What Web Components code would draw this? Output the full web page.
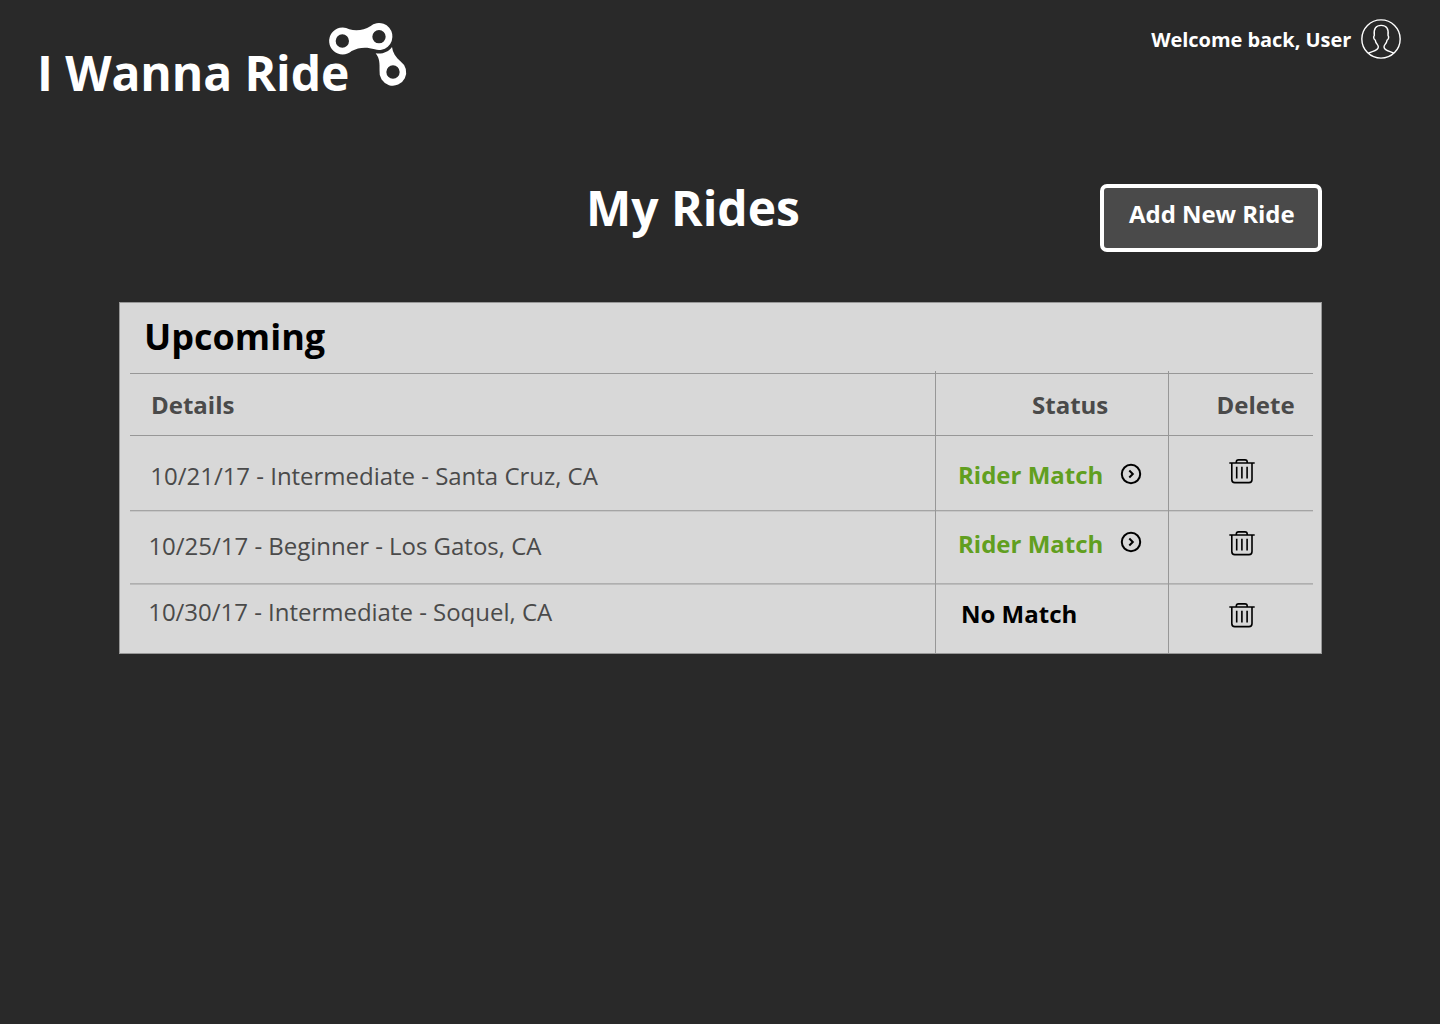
<!DOCTYPE html>
<html lang="en">
<head>
<meta charset="utf-8">
<title>I Wanna Ride</title>
<style>
html,body{margin:0;background:#292929}
body{height:1024px;overflow:hidden;font-family:"Open Sans",sans-serif;color:#fff}
</style>
</head>
<body>
<ride-app></ride-app>
<script>
const define = (name, html) => customElements.define(name, class extends HTMLElement {
  constructor() {
    super();
    this.attachShadow({ mode: 'open' }).innerHTML = html;
  }
});

define('chain-icon', `<style>:host{display:block}svg{display:block}</style>
<svg width="110" height="90" viewBox="0 0 330 270" fill="#fff" fill-rule="evenodd">
<path d="M118 57.800C140 64 163 60 181 48.400A40.500 40.500 0 1 1 194 118C170 110 145 112 125 123.200A40.500 40.500 0 1 1 118 57.800ZM97 73A20 20 0 1 0 97 113A20 20 0 1 0 97 73ZM207 60A20 20 0 1 0 207 100A20 20 0 1 0 207 60Z"/>
<path d="M197 130C217 133 236 126 246 111C248 127 257 142 272 154.500A40.100 40.100 0 1 1 208.700 182C209 160 209 145 197 130ZM249 166A20 20 0 1 0 249 206A20 20 0 1 0 249 166Z"/>
</svg>`);

define('user-icon', `<style>:host{display:block}svg{display:block}</style>
<svg width="42" height="42" viewBox="30 30 126 126" fill="none" stroke="#fff" stroke-width="4.200">
<circle cx="93" cy="93" r="57.500"/>
<path d="M55 136C63 130 85 129 85 117C85 110 77 107 76 97C70 92 70 87 73 82C70 62 78 52 93.500 52S117 62 114 82C117 87 117 92 111 97C110 107 102 110 102 117C102 129 124 130 132 136"/>
</svg>`);

define('trash-icon', `<style>:host{display:block}svg{display:block}</style>
<svg width="26" height="26" viewBox="0 0 26 26" fill="none" stroke="#000" stroke-width="1.600">
<path d="M0.300 4H25.700M7.300 4V3Q7.300.900 9.600.900H16Q18.200.900 18.200 3V4M2.800 4V20.500Q2.800 23.600 5.800 23.600H20Q23 23.600 23 20.500V4M7.700 7.800V19.600M12.900 7.800V19.600M18.100 7.800V19.600"/>
</svg>`);

define('go-icon', `<style>:host{display:block}svg{display:block}</style>
<svg width="22" height="22" viewBox="0 0 22 22" fill="none" stroke="#000" stroke-width="2">
<circle cx="11" cy="11" r="9.200"/><path d="M9.300 7.500L12.800 11L9.300 14.500"/>
</svg>`);

define('app-header', `<style>
:host{display:flex;justify-content:space-between;height:120px}
.brand{display:flex;align-items:flex-start;padding-left:37px}
h1{margin:43px 0 0;width:273px;font-size:48px;line-height:60px;white-space:nowrap;letter-spacing:-.1px}
chain-icon{margin-top:10px}
.user{display:flex;align-items:flex-start;padding-right:38px;gap:8.700px}
span{margin-top:25px;line-height:30px;font-size:20px;font-weight:700;letter-spacing:-.04px}
user-icon{margin-top:18px}
</style>
<div class="brand"><h1>I Wanna Ride</h1><chain-icon></chain-icon></div>
<div class="user"><span>Welcome back, User</span><user-icon></user-icon></div>`);

define('page-title', `<style>
:host{display:grid;grid-template-columns:1fr 222px;height:182px;padding:0 118px 0 586px;box-sizing:border-box}
h2{margin:58px 0 0;font-size:48px;line-height:60px}
button{all:unset;box-sizing:border-box;margin-top:64px;height:67.700px;border:4px solid #fff;border-radius:7px;background:#4a4a4a;padding:10.500px 0 19.200px 25px;font-size:24px;font-weight:700;line-height:30px;white-space:nowrap;letter-spacing:-.05px}
</style><h2>My Rides</h2><button><slot></slot></button>`);

define('ride-cell', `<style>
:host{display:flex;align-items:flex-start;box-sizing:border-box;font-size:24px;line-height:30px;white-space:nowrap;color:#4a4a4a;letter-spacing:-.02px}
:host([line]){border-left:1px solid #979797}
:host([head]),:host([match]),:host([none]){font-weight:700;letter-spacing:0}
:host([match]){color:#619f20}
:host([none]){color:#000}
:host([head][line]){margin-top:-2px}
</style><slot></slot>`);

define('ride-row', `<style>
:host{--a:#979797;--b:transparent;display:grid;grid-template-columns:805px 233px 145px;background:linear-gradient(var(--a) 0 1px,var(--b) 1px 2px,transparent 2px)}
</style><slot></slot>`);

define('ride-table', `<style>
:host{display:flex;flex-direction:column;margin:0 118px 0 119px;height:352px;box-sizing:border-box;border:1px solid #979797;background:#d8d8d8;padding:0 8px 0 10px}
h3{margin:0;box-sizing:border-box;height:70px;padding:10px 0 0 14px;color:#000;font-size:36px;line-height:48px}
</style>
<h3>Upcoming</h3>
<ride-row style="height:62px">
<ride-cell head style="padding:17px 0 0 21px">Details</ride-cell>
<ride-cell head line style="padding:19px 0 0 96px">Status</ride-cell>
<ride-cell head line style="padding:19px 0 0 47.600px">Delete</ride-cell>
</ride-row>
<ride-row style="height:75px">
<ride-cell style="padding:26px 0 0 20.300px">10/21/17 - Intermediate - Santa Cruz, CA</ride-cell>
<ride-cell match line style="padding:25px 0 0 22px"><span style="width:162px">Rider Match</span><go-icon style="margin-top:3px"></go-icon></ride-cell>
<ride-cell line style="padding:24px 0 0 60px"><trash-icon></trash-icon></ride-cell>
</ride-row>
<ride-row style="height:73px;--a:#a4a4a4;--b:#c6c6c6">
<ride-cell style="padding:21px 0 0 18.400px">10/25/17 - Beginner - Los Gatos, CA</ride-cell>
<ride-cell match line style="padding:19px 0 0 22px"><span style="width:162px">Rider Match</span><go-icon style="margin-top:2px"></go-icon></ride-cell>
<ride-cell line style="padding:21px 0 0 60px"><trash-icon></trash-icon></ride-cell>
</ride-row>
<ride-row style="flex:1;--a:#afafaf;--b:#bcbcbc">
<ride-cell style="padding:14px 0 0 18.200px">10/30/17 - Intermediate - Soquel, CA</ride-cell>
<ride-cell none line style="padding:16px 0 0 25px">No Match</ride-cell>
<ride-cell line style="padding:20px 0 0 60px"><trash-icon></trash-icon></ride-cell>
</ride-row>`);

define('ride-app', `<style>:host{display:flex;flex-direction:column}</style>
<app-header></app-header><page-title>Add New Ride</page-title><ride-table></ride-table>`);
</script>
</body>
</html>
